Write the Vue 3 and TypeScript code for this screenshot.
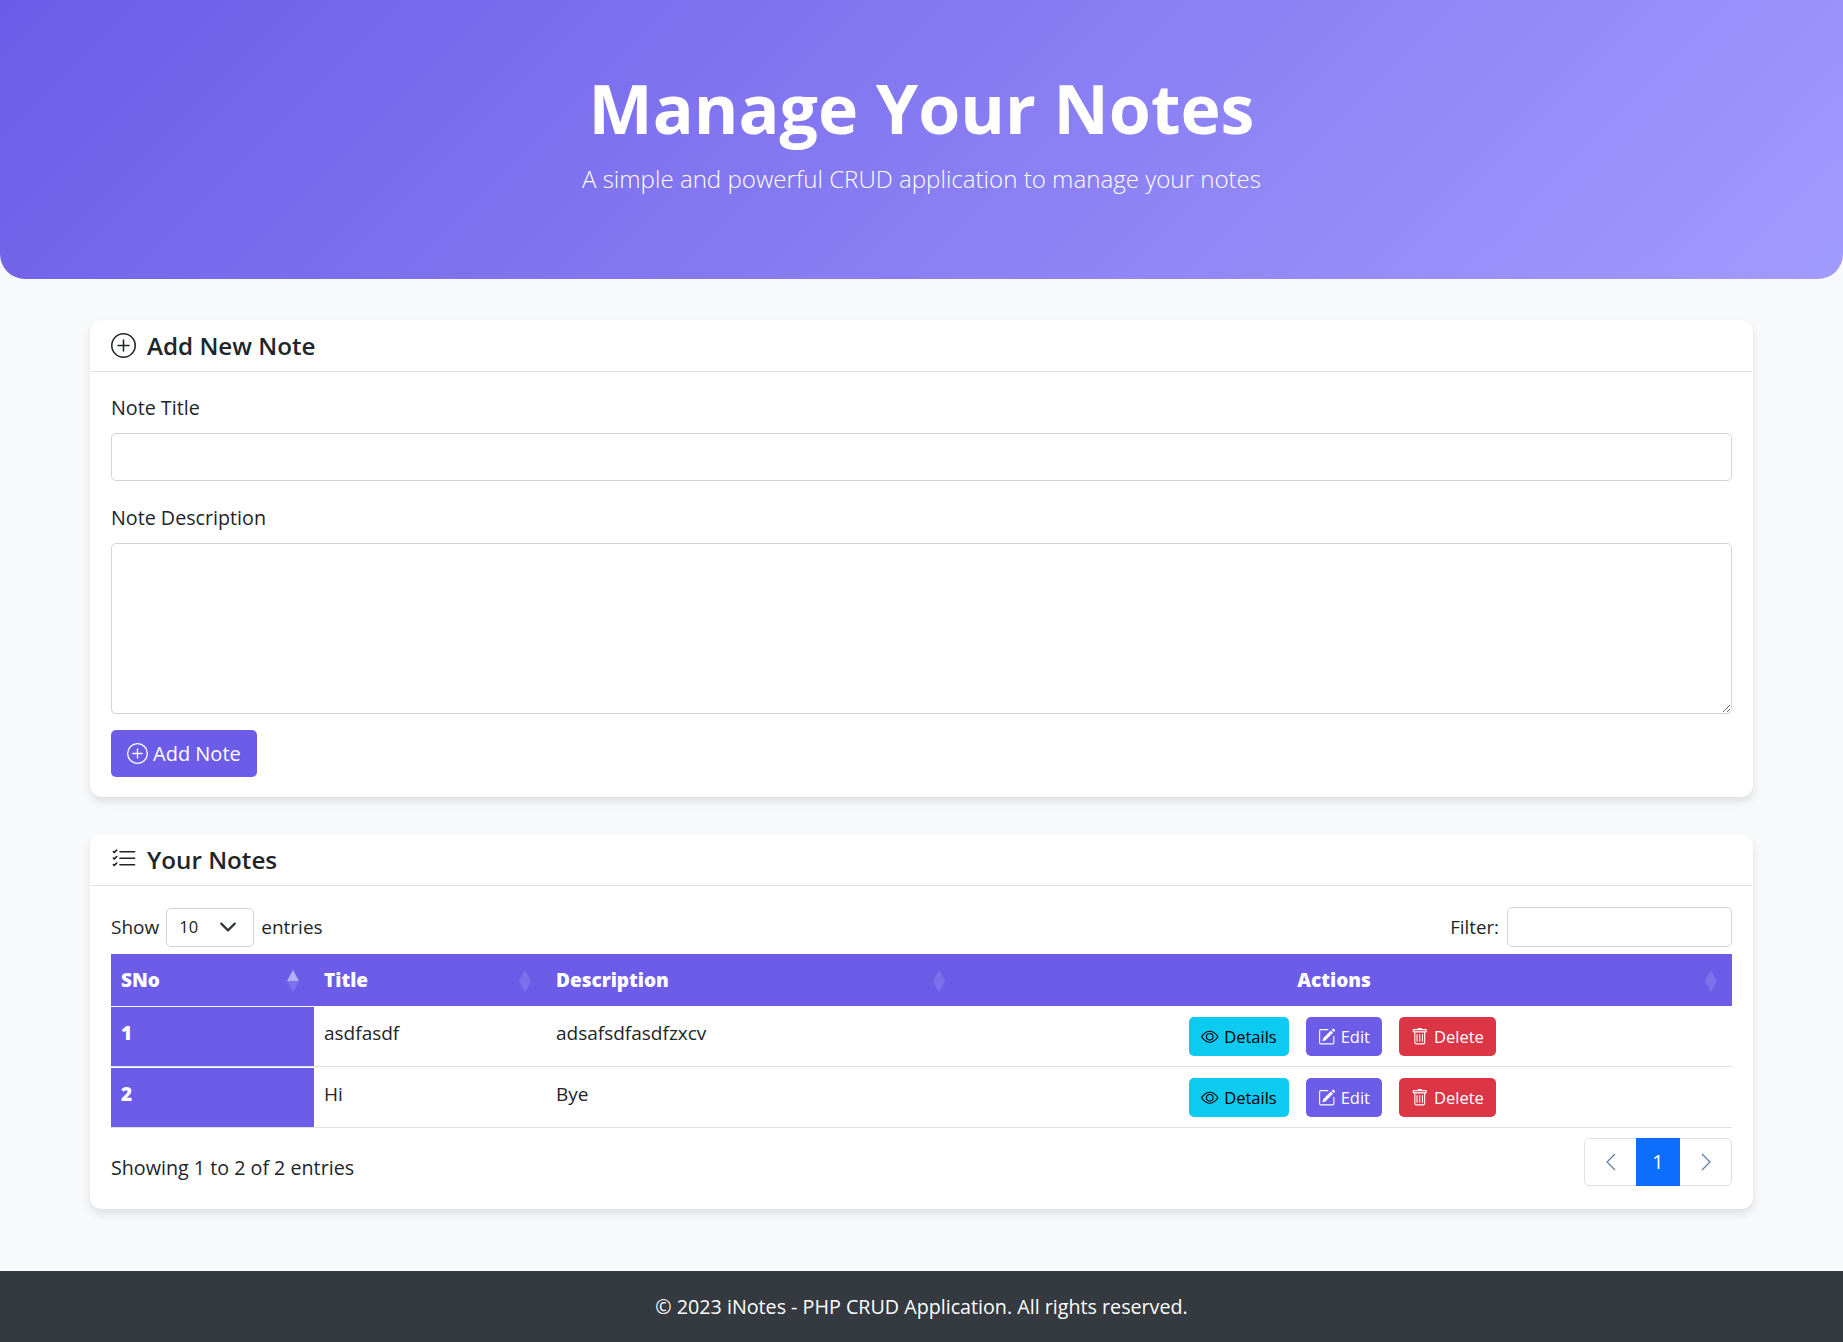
<script setup lang="ts">
const notes = [
  { id: 1, title: 'asdfasdf', description: 'adsafsdfasdfzxcv' },
  { id: 2, title: 'Hi', description: 'Bye' },
]
</script>

<template>
  <div class="page">
    <header class="hero">
      <h1>Manage Your Notes</h1>
      <p>A simple and powerful CRUD application to manage your notes</p>
    </header>

    <main class="container">
      <section class="card">
        <div class="card-header">
          <svg class="head-icon" viewBox="0 0 16 16" fill="currentColor"><path d="M8 15A7 7 0 1 1 8 1a7 7 0 0 1 0 14zm0 1A8 8 0 1 0 8 0a8 8 0 0 0 0 16z"/><path d="M8 4a.5.5 0 0 1 .5.5v3h3a.5.5 0 0 1 0 1h-3v3a.5.5 0 0 1-1 0v-3h-3a.5.5 0 0 1 0-1h3v-3A.5.5 0 0 1 8 4z"/></svg>
          <h5>Add New Note</h5>
        </div>
        <div class="card-body form-body">
          <label class="form-label">Note Title</label>
          <input class="form-control title-input" type="text" />
          <label class="form-label desc-label">Note Description</label>
          <textarea class="form-control desc-input"></textarea>
          <button class="btn btn-add">
            <svg viewBox="0 0 16 16" fill="currentColor"><path d="M8 15A7 7 0 1 1 8 1a7 7 0 0 1 0 14zm0 1A8 8 0 1 0 8 0a8 8 0 0 0 0 16z"/><path d="M8 4a.5.5 0 0 1 .5.5v3h3a.5.5 0 0 1 0 1h-3v3a.5.5 0 0 1-1 0v-3h-3a.5.5 0 0 1 0-1h3v-3A.5.5 0 0 1 8 4z"/></svg>
            Add Note
          </button>
        </div>
      </section>

      <section class="card">
        <div class="card-header">
          <svg class="head-icon list" viewBox="0 0 16 16" fill="currentColor"><path fill-rule="evenodd" d="M5 11.5a.5.5 0 0 1 .5-.5h9a.5.5 0 0 1 0 1h-9a.5.5 0 0 1-.5-.5zm0-4a.5.5 0 0 1 .5-.5h9a.5.5 0 0 1 0 1h-9a.5.5 0 0 1-.5-.5zm0-4a.5.5 0 0 1 .5-.5h9a.5.5 0 0 1 0 1h-9a.5.5 0 0 1-.5-.5zM3.854 2.146a.5.5 0 0 1 0 .708l-1.5 1.5a.5.5 0 0 1-.708 0l-.5-.5a.5.5 0 1 1 .708-.708L2 3.293l1.146-1.147a.5.5 0 0 1 .708 0zm0 4a.5.5 0 0 1 0 .708l-1.5 1.5a.5.5 0 0 1-.708 0l-.5-.5a.5.5 0 1 1 .708-.708L2 7.293l1.146-1.147a.5.5 0 0 1 .708 0zm0 4a.5.5 0 0 1 0 .708l-1.5 1.5a.5.5 0 0 1-.708 0l-.5-.5a.5.5 0 0 1 .708-.708l.146.147 1.146-1.147a.5.5 0 0 1 .708 0z"/></svg>
          <h5>Your Notes</h5>
        </div>
        <div class="card-body">
          <div class="dt-top">
            <div class="dt-length">
              <span>Show</span>
              <div class="select-box">
                <span>10</span>
                <svg viewBox="0 0 16 16" fill="none" stroke="#343a40" stroke-width="2" stroke-linecap="round" stroke-linejoin="round"><path d="m2 5 6 6 6-6"/></svg>
              </div>
              <span>entries</span>
            </div>
            <div class="dt-filter">
              <span>Filter:</span>
              <input class="filter-input" type="search" />
            </div>
          </div>

          <table class="notes">
            <colgroup>
              <col class="c1" /><col class="c2" /><col class="c3" /><col />
            </colgroup>
            <thead>
              <tr>
                <th><span>SNo</span><i class="sort active"></i></th>
                <th><span>Title</span><i class="sort"></i></th>
                <th><span>Description</span><i class="sort"></i></th>
                <th class="center"><span>Actions</span><i class="sort"></i></th>
              </tr>
            </thead>
            <tbody>
              <tr v-for="n in notes" :key="n.id">
                <th scope="row">{{ n.id }}</th>
                <td>{{ n.title }}</td>
                <td>{{ n.description }}</td>
                <td>
                  <div class="actions">
                    <button class="btn btn-sm btn-info">
                      <svg viewBox="0 0 16 16" fill="currentColor"><path d="M16 8s-3-5.5-8-5.5S0 8 0 8s3 5.5 8 5.5S16 8 16 8zM1.173 8a13.133 13.133 0 0 1 1.66-2.043C4.12 4.668 5.88 3.5 8 3.5c2.12 0 3.879 1.168 5.168 2.457A13.133 13.133 0 0 1 14.828 8c-.058.087-.122.183-.195.288-.335.48-.83 1.12-1.465 1.755C11.879 11.332 10.119 12.5 8 12.5c-2.12 0-3.879-1.168-5.168-2.457A13.134 13.134 0 0 1 1.172 8z"/><path d="M8 5.5a2.5 2.5 0 1 0 0 5 2.5 2.5 0 0 0 0-5zM4.5 8a3.5 3.5 0 1 1 7 0 3.5 3.5 0 0 1-7 0z"/></svg>
                      Details
                    </button>
                    <button class="btn btn-sm btn-edit">
                      <svg viewBox="0 0 16 16" fill="currentColor"><path d="M15.502 1.94a.5.5 0 0 1 0 .706L14.459 3.69l-2-2L13.502.646a.5.5 0 0 1 .707 0l1.293 1.293zm-1.75 2.456-2-2L4.939 9.21a.5.5 0 0 0-.121.196l-.805 2.414a.25.25 0 0 0 .316.316l2.414-.805a.5.5 0 0 0 .196-.12l6.813-6.814z"/><path fill-rule="evenodd" d="M1 13.5A1.5 1.5 0 0 0 2.5 15h11a1.5 1.5 0 0 0 1.5-1.5v-6a.5.5 0 0 0-1 0v6a.5.5 0 0 1-.5.5h-11a.5.5 0 0 1-.5-.5v-11a.5.5 0 0 1 .5-.5H9a.5.5 0 0 0 0-1H2.5A1.5 1.5 0 0 0 1 2.5v11z"/></svg>
                      Edit
                    </button>
                    <button class="btn btn-sm btn-delete">
                      <svg viewBox="0 0 16 16" fill="currentColor"><path d="M5.5 5.5A.5.5 0 0 1 6 6v6a.5.5 0 0 1-1 0V6a.5.5 0 0 1 .5-.5zm2.5 0a.5.5 0 0 1 .5.5v6a.5.5 0 0 1-1 0V6a.5.5 0 0 1 .5-.5zm3 .5a.5.5 0 0 0-1 0v6a.5.5 0 0 0 1 0V6z"/><path fill-rule="evenodd" d="M14.5 3a1 1 0 0 1-1 1H13v9a2 2 0 0 1-2 2H5a2 2 0 0 1-2-2V4h-.5a1 1 0 0 1-1-1V2a1 1 0 0 1 1-1H6a1 1 0 0 1 1-1h2a1 1 0 0 1 1 1h3.5a1 1 0 0 1 1 1v1zM4.118 4 4 4.059V13a1 1 0 0 0 1 1h6a1 1 0 0 0 1-1V4.059L11.882 4H4.118zM2.5 3V2h11v1h-11z"/></svg>
                      Delete
                    </button>
                  </div>
                </td>
              </tr>
            </tbody>
          </table>

          <div class="dt-bottom">
            <span class="info">Showing 1 to 2 of 2 entries</span>
            <nav class="pagination">
              <span class="page-arrow">
                <svg viewBox="0 0 10 18" fill="none" stroke="currentColor" stroke-width="1.2"><path d="M9 1 1 9l8 8"/></svg>
              </span>
              <span class="page-num">1</span>
              <span class="page-arrow">
                <svg viewBox="0 0 10 18" fill="none" stroke="currentColor" stroke-width="1.2"><path d="m1 1 8 8-8 8"/></svg>
              </span>
            </nav>
          </div>
        </div>
      </section>
    </main>

    <footer class="footer">© 2023 iNotes - PHP CRUD Application. All rights reserved.</footer>
  </div>
</template>

<style>
html, body { margin: 0; background: #f8f9fa; }
</style>

<style scoped>
.page {
  min-height: 1342px;
  display: flex;
  flex-direction: column;
  background: #f8f9fa;
  color: #212529;
  font-family: "Open Sans", "Noto Sans", sans-serif;
  font-size: 19.7px;
  line-height: 30px;
}
.hero {
  height: 279px;
  box-sizing: border-box;
  padding-top: 66px;
  text-align: center;
  color: #fff;
  background: linear-gradient(135deg, #6c5ce7, #a29bfe);
  border-radius: 0 0 25px 25px;
}
.hero h1 {
  margin: 0 0 10px;
  font-size: 68px;
  line-height: 84px;
  font-weight: 700;
}
.hero p {
  margin: 0;
  font-size: 24.1px;
  line-height: 37px;
  font-weight: 300;
}
.container {
  flex: 1;
  box-sizing: border-box;
  width: 1663px;
  margin: 0 auto;
  padding-top: 41px;
  display: flex;
  flex-direction: column;
  gap: 37px;
}
.card {
  background: #fff;
  border: 1px solid rgba(0, 0, 0, 0.005);
  border-radius: 12px;
  box-shadow: 0 5px 8px rgba(0, 0, 0, 0.1);
}
.card-header {
  height: 51px;
  box-sizing: border-box;
  display: flex;
  align-items: center;
  gap: 11px;
  padding: 0 20px;
  border-bottom: 1px solid #dfdfdf;
}
.card-header h5 {
  margin: 0;
  font-size: 24.2px;
  font-weight: 600;
  line-height: 30px;
}
.head-icon { width: 25px; height: 25px; flex: none; margin-top: -2px; }
.head-icon.list { width: 26px; height: 26px; margin-right: -1px; }
.card-body { padding: 20px; }
.form-body { padding-bottom: 19px; }
.form-label { display: block; padding-top: 1px; margin-bottom: 10px; }
.desc-label { padding-top: 0; }
.form-control {
  display: block;
  box-sizing: border-box;
  width: 100%;
  background: #fff;
  border: 1px solid #ced4da;
  border-radius: 5px;
  font: inherit;
  outline: none;
}
.title-input { height: 48px; margin-bottom: 22px; }
.desc-input { height: 171px; margin-bottom: 16px; resize: vertical; }
.btn {
  display: inline-flex;
  align-items: center;
  box-sizing: border-box;
  border: 0;
  border-radius: 5px;
  font-family: inherit;
}
.btn-add {
  height: 47px;
  width: 146px;
  padding: 0 16px;
  gap: 5px;
  background: #6c5ce7;
  color: #fff;
  font-size: 20px;
}
.btn-add svg { width: 21px; height: 21px; }
.dt-top {
  display: flex;
  justify-content: space-between;
  align-items: center;
  margin-top: 1px;
  margin-bottom: 7px;
  font-size: 19px;
}
.dt-length, .dt-filter { display: flex; align-items: center; gap: 7px; }
.dt-filter { gap: 8px; font-size: 18.7px; }
.select-box {
  width: 88px;
  height: 39px;
  box-sizing: border-box;
  padding: 0 16px 0 12px;
  display: flex;
  align-items: center;
  justify-content: space-between;
  border: 1px solid #ced4da;
  border-radius: 5px;
  font-size: 16.5px;
}
.select-box svg { width: 18px; height: 18px; }
.filter-input {
  width: 225px;
  height: 40px;
  box-sizing: border-box;
  border: 1px solid #ced4da;
  border-radius: 5px;
  outline: none;
}
.notes {
  width: 100%;
  border-collapse: separate;
  border-spacing: 0;
  table-layout: fixed;
  font-size: 19px;
}
.c1 { width: 203px; }
.c2 { width: 232px; }
.c3 { width: 414px; }
.notes thead th {
  position: relative;
  height: 52px;
  padding: 0 10px;
  box-sizing: border-box;
  background: #6c5ce7;
  color: #fff;
  font-size: 19px;
  font-weight: 800;
  text-align: left;
}
.notes thead th.center { text-align: center; padding-right: 34px; }
.sort {
  position: absolute;
  right: 14px;
  top: 16px;
  width: 13px;
  height: 22px;
}
.sort::before, .sort::after {
  content: "";
  position: absolute;
  left: 0;
  width: 0;
  height: 0;
  border-left: 6.5px solid transparent;
  border-right: 6.5px solid transparent;
}
.sort::before { top: 0; border-bottom: 11px solid rgba(255, 255, 255, 0.125); }
.sort::after { bottom: 0; border-top: 11px solid rgba(255, 255, 255, 0.125); }
.sort.active::before { border-bottom-color: rgba(255, 255, 255, 0.5); }
.notes tbody th, .notes tbody td {
  height: 61px;
  box-sizing: border-box;
  padding: 12px 10px 0;
  vertical-align: top;
  border-bottom: 1px solid #dee2e6;
}
.notes tbody th {
  background: #6c5ce7;
  color: #fff;
  font-weight: 800;
  text-align: left;
  box-shadow: inset 0 1px #fff;
}
.actions {
  display: flex;
  justify-content: center;
  gap: 17px;
  margin-top: -1px;
  padding-right: 7px;
}
.btn-sm {
  height: 39px;
  padding: 0 12px;
  gap: 5.5px;
  font-size: 16.5px;
}
.btn-sm svg { width: 17.5px; height: 17.5px; }
.btn-info { background: #0dcaf0; color: #000; }
.btn-edit { background: #6c5ce7; color: #fff; }
.btn-delete { background: #dc3545; color: #fff; }
.dt-bottom {
  display: flex;
  justify-content: space-between;
  align-items: flex-start;
  margin-top: 10px;
  margin-bottom: 2px;
}
.info { padding-top: 15px; }
.pagination {
  display: flex;
  height: 48px;
  box-sizing: border-box;
  border: 1px solid #dee2e6;
  border-radius: 5px;
}
.page-arrow {
  width: 51px;
  display: flex;
  align-items: center;
  justify-content: center;
  color: #5b7ea6;
}
.page-arrow svg { width: 10px; height: 18px; }
.page-num {
  width: 44px;
  margin: -1px 0;
  display: flex;
  align-items: center;
  justify-content: center;
  background: #0d6efd;
  color: #fff;
}
.footer {
  height: 71px;
  display: flex;
  align-items: center;
  justify-content: center;
  background: #343a40;
  color: #fff;
}
</style>
